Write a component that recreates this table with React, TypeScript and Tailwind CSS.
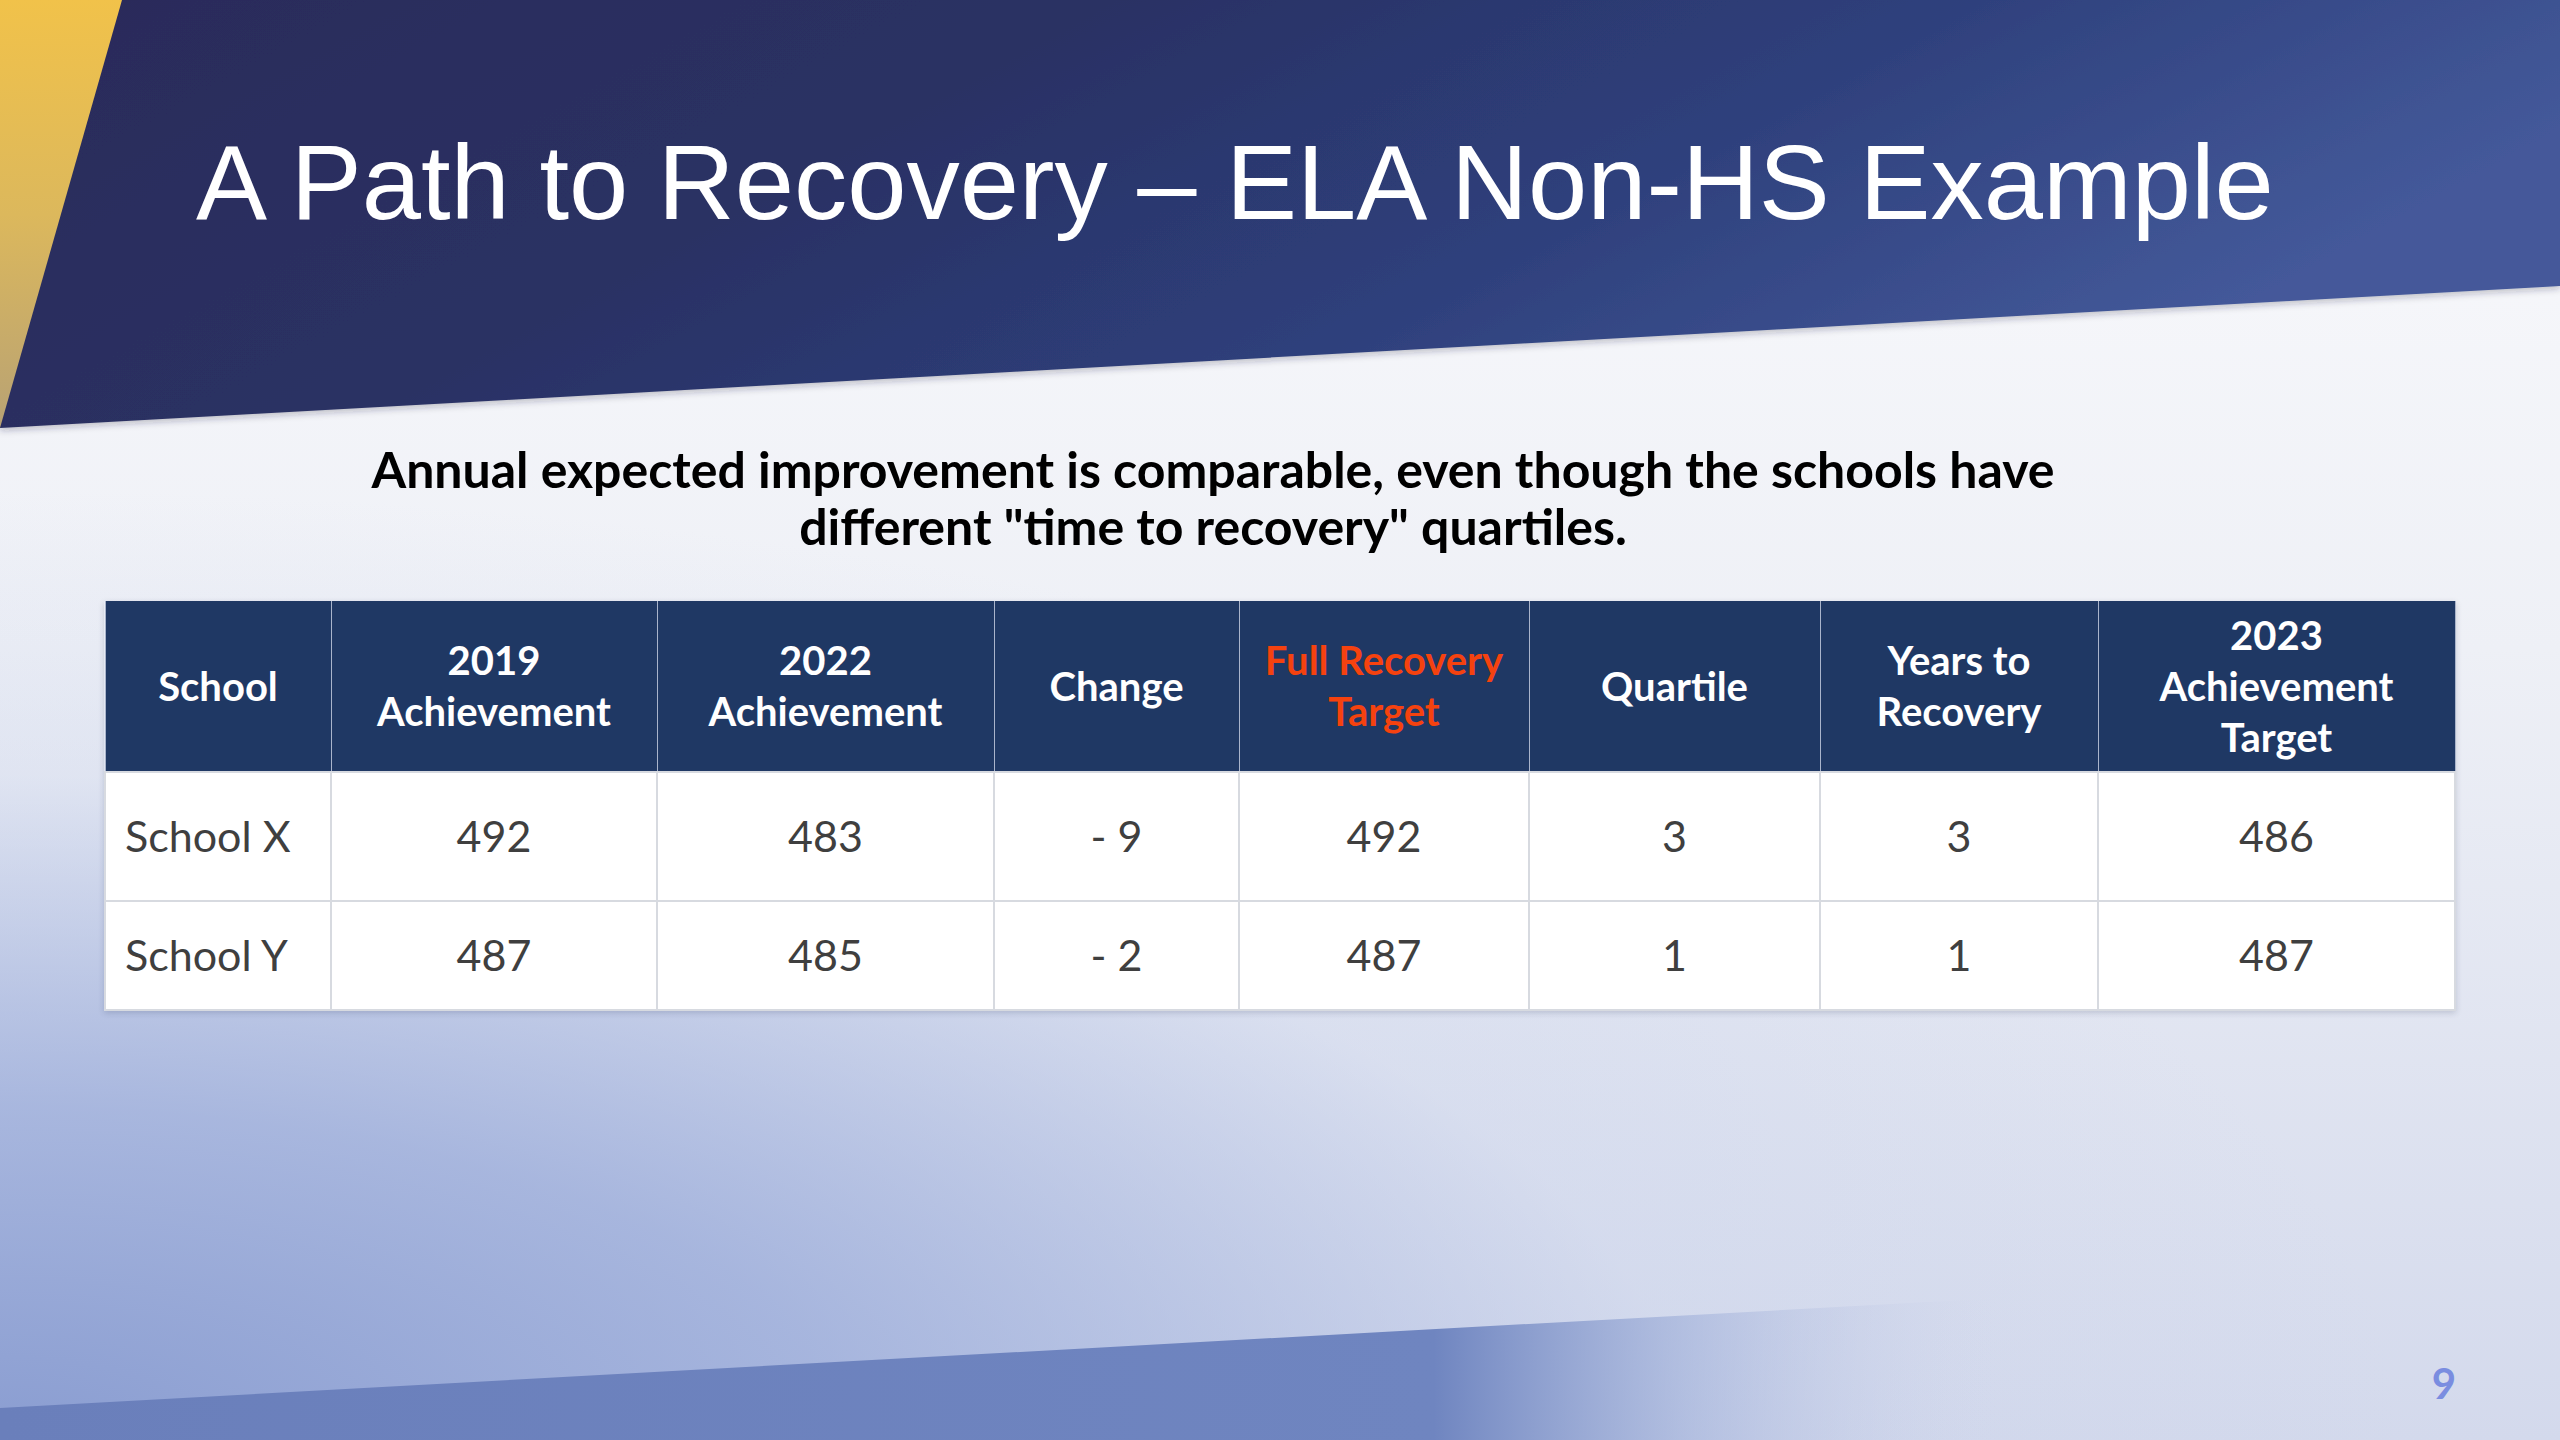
import React from 'react'

type Column = {
  lines: string[]
  width: string
  accent?: boolean
}

const columns: Column[] = [
  { lines: ['School'], width: 'w-[226px]' },
  { lines: ['2019', 'Achievement'], width: 'w-[326px]' },
  { lines: ['2022', 'Achievement'], width: 'w-[337px]' },
  { lines: ['Change'], width: 'w-[245px]' },
  { lines: ['Full Recovery', 'Target'], width: 'w-[290px]', accent: true },
  { lines: ['Quartile'], width: 'w-[291px]' },
  { lines: ['Years to', 'Recovery'], width: 'w-[278px]' },
  { lines: ['2023', 'Achievement', 'Target'], width: 'w-[357px]' },
]

const rows = [
  { school: 'School X', values: ['492', '483', '- 9', '492', '3', '3', '486'], height: 'h-[129px]' },
  { school: 'School Y', values: ['487', '485', '- 2', '487', '1', '1', '487'], height: 'h-[109px]' },
]

function Backdrop() {
  return (
    <svg
      className="absolute inset-0"
      width="2560"
      height="1440"
      viewBox="0 0 2560 1440"
      aria-hidden="true"
    >
      <defs>
        <linearGradient id="band" x1="0" y1="0" x2="1" y2="0.3">
          <stop offset="0" stopColor="#292b59" />
          <stop offset="0.4" stopColor="#2a3164" />
          <stop offset="0.7" stopColor="#2e407c" />
          <stop offset="1" stopColor="#44599a" />
        </linearGradient>
        <linearGradient id="gold" x1="0" y1="0" x2="0" y2="1">
          <stop offset="0" stopColor="#f1c24a" />
          <stop offset="0.5" stopColor="#dcb85c" />
          <stop offset="1" stopColor="#b8a274" />
        </linearGradient>
        <linearGradient id="foot" x1="0" y1="0" x2="1" y2="0">
          <stop offset="0" stopColor="#6a7fbb" />
          <stop offset="0.56" stopColor="#6f85c0" />
          <stop offset="0.66" stopColor="#9fafd9" stopOpacity="0.6" />
          <stop offset="0.78" stopColor="#cdd3ea" stopOpacity="0" />
        </linearGradient>
        <filter id="soft" x="-5%" y="-5%" width="110%" height="120%">
          <feDropShadow dx="0" dy="3" stdDeviation="3" floodColor="#1c2140" floodOpacity="0.25" />
        </filter>
      </defs>
      <polygon points="0,0 2560,0 2560,286 0,428" fill="url(#band)" filter="url(#soft)" />
      <polygon points="0,0 122,0 0,428" fill="url(#gold)" />
      <polygon points="0,1408 1910,1303 2560,1268 2560,1440 0,1440" fill="url(#foot)" />
    </svg>
  )
}

export default function App() {
  return (
    <div className="relative w-[2560px] h-[1440px] overflow-hidden bg-[radial-gradient(ellipse_2400px_950px_at_0%_100%,#8a9dd1_0%,rgba(150,168,216,0.75)_35%,rgba(200,210,235,0.3)_70%,rgba(255,255,255,0)_100%),linear-gradient(to_bottom,#fbfbfd_0%,#eef0f6_45%,#d3d9ec_100%)]">
      <Backdrop />

      <div className="relative flex flex-col h-full">
        {/* Title */}
        <h1 className="pt-[130px] pl-[196px] text-[106.5px] leading-[106px] text-white font-['Liberation_Sans',Arial,sans-serif] font-normal">
          A Path to Recovery – ELA Non-HS Example
        </h1>

        {/* Subtitle */}
        <p className="mt-[205px] pl-[104px] pr-[238px] text-center text-[50px] leading-[57px] font-bold text-black font-['Lato',sans-serif]">
          Annual expected improvement is comparable, even though the schools have
          <br />
          different "time to recovery" quartiles.
        </p>

        {/* Table */}
        <div className="mt-[46px] pl-[104px]">
          <table className="border-collapse table-fixed font-['Lato',sans-serif] shadow-[0_2px_6px_rgba(30,40,80,0.18)]">
            <thead>
              <tr className="h-[171px] bg-[#1f3864]">
                {columns.map((col, i) => (
                  <th
                    key={i}
                    className={`${col.width} border-x border-[#a9b4cb] px-2 text-[40px] leading-[51px] font-bold align-middle text-center ${
                      col.accent ? 'text-[#f5420f]' : 'text-white'
                    }`}
                  >
                    {col.lines.map((line) => (
                      <div key={line}>{line}</div>
                    ))}
                  </th>
                ))}
              </tr>
            </thead>
            <tbody>
              {rows.map((row) => (
                <tr key={row.school} className={`${row.height} bg-white`}>
                  <td className="border-2 border-[#d7dae0] pl-[19px] text-left text-[43px] text-[#3f3f3f]">
                    {row.school}
                  </td>
                  {row.values.map((v, i) => (
                    <td
                      key={i}
                      className="border-2 border-[#d7dae0] text-center text-[43px] text-[#3f3f3f]"
                    >
                      {v}
                    </td>
                  ))}
                </tr>
              ))}
            </tbody>
          </table>
        </div>

        {/* Page number */}
        <div className="mt-auto flex justify-end pr-[104px] pb-[36px]">
          <span className="text-[42px] leading-none font-bold text-[#7a8de0] font-['Lato',sans-serif]">9</span>
        </div>
      </div>
    </div>
  )
}
